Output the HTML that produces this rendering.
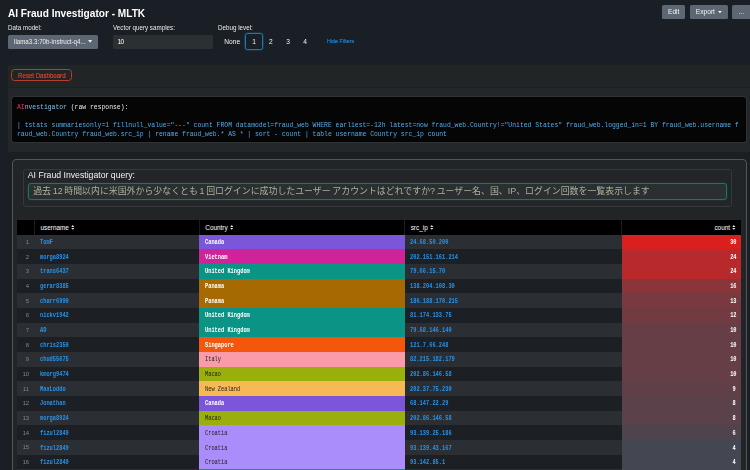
<!DOCTYPE html>
<html lang="ja">
<head>
<meta charset="utf-8">
<title>AI Fraud Investigator - MLTK</title>
<style>
html,body{margin:0;padding:0;}
body{width:750px;height:470px;overflow:hidden;position:relative;background:#1a1e25;font-family:"Liberation Sans","Noto Sans CJK JP",sans-serif;color:#fff;}
.abs{position:absolute;}
h1{position:absolute;left:7.9px;top:6.2px;margin:0;font-size:10.1px;line-height:16px;font-weight:bold;color:#fff;white-space:nowrap;letter-spacing:0px;}
.btn{position:absolute;top:5px;height:14px;background:#5c6773;border-radius:1.5px;color:#f2f4f5;font-size:6.6px;line-height:14px;text-align:center;white-space:nowrap;}
.lbl{position:absolute;top:23.3px;font-size:6.8px;line-height:9px;color:#e8eaec;white-space:nowrap;transform:scaleX(0.92);transform-origin:0 50%;}
.sel{position:absolute;left:7.6px;top:34.5px;width:90.8px;height:14.1px;background:#5c6773;border-radius:1.5px;color:#eef0f2;font-size:6.8px;line-height:14.1px;white-space:nowrap;}
.inp{position:absolute;left:113px;top:34.6px;width:99.5px;height:14px;background:#2b3033;border-radius:1.5px;color:#fff;font-size:6.6px;line-height:14px;}
.rad{position:absolute;top:37px;font-size:6.6px;line-height:9px;color:#f4f5f6;white-space:nowrap;transform:translateX(-50%);}
.radsel{position:absolute;left:245.4px;top:33.2px;width:16px;height:14.4px;border:1px solid #1b78b4;border-radius:2.5px;box-shadow:0 0 0 0.6px rgba(20,110,170,.55);}
.hide{position:absolute;left:327px;top:37.3px;font-size:6.1px;line-height:8px;color:#1c88e2;white-space:nowrap;transform:scaleX(0.885);transform-origin:0 50%;-webkit-text-stroke:0.15px #1c88e2;}
.p1{position:absolute;left:8px;top:65px;width:760px;height:22px;background:#212526;}
.reset{position:absolute;left:2.8px;top:4.2px;width:59px;height:10.3px;border:0.75px solid #b93c2c;border-radius:3.5px;color:#e6432f;font-size:6.9px;line-height:10.3px;text-align:center;white-space:nowrap;}
.reset span{display:inline-block;position:relative;left:0.8px;top:0.4px;transform:scaleX(0.885);-webkit-text-stroke:0.15px #e6432f;}
.p2{position:absolute;left:8px;top:87.5px;width:760px;height:64.5px;background:#232729;}
.code{position:absolute;left:4px;top:9px;width:734px;height:45.5px;background:#050506;border-radius:2.5px;box-shadow:0 0 0 0.7px #33383b;font-family:"Liberation Mono","DejaVu Sans Mono",monospace;font-size:7.2px;line-height:9px;color:#4fadea;white-space:pre;overflow:hidden;}
.code div{position:absolute;left:5px;transform:scaleX(0.8900);transform-origin:0 50%;}
.p3{position:absolute;left:8px;top:152px;width:760px;height:340px;background:#1b1f23;}
.outer{position:absolute;left:12px;top:158.5px;width:733px;height:330px;border:0.9px solid #50565b;border-radius:4px;background:#212527;}
.qbox{position:absolute;left:22.6px;top:168.8px;width:707.2px;height:36.6px;border:0.7px solid #34393d;border-radius:3px;background:#222629;}
.qlbl{position:absolute;left:4.2px;top:0.4px;font-size:8.7px;line-height:10px;color:#f0f1f2;white-space:nowrap;}
.qinp{position:absolute;left:4px;top:13.1px;width:697.5px;height:15.6px;border:1px solid #17785a;border-radius:3px;background:#2a2f31;box-shadow:0 0 1.5px rgba(20,130,95,.6);color:#a9b499;font-size:8.92px;word-spacing:-0.8px;line-height:15.6px;white-space:nowrap;overflow:hidden;}
.qinp span{position:absolute;left:4.6px;top:-0.1px;}
table{position:absolute;left:17px;top:220px;width:724px;border-collapse:collapse;table-layout:fixed;}
th{height:14.6px;padding:0;background:#000;color:#fff;font-size:6.4px;font-weight:normal;text-align:left;line-height:14.6px;white-space:nowrap;}
th span.t{position:relative;top:0.8px;}
td{height:14.67px;padding:0;font-family:"Liberation Mono","DejaVu Sans Mono",monospace;font-size:6.3px;line-height:14.67px;white-space:nowrap;overflow:hidden;}
.m{display:inline-block;transform:scaleX(0.847);transform-origin:0 50%;position:relative;top:1.5px;}
.m.r{transform-origin:100% 50%;}
tr:nth-child(odd) td{background:#2b2f33;}
tr:nth-child(even) td{background:#1c2025;}
td.n{font-family:"Liberation Sans",sans-serif;font-size:5.9px;color:#7f868c;text-align:right;padding-right:5.8px;letter-spacing:-0.2px;}
td.n span{position:relative;top:0.3px;}
td.u,td.i{color:#2893ea;padding-left:5.4px;font-weight:bold;}
td.c{padding-left:5.6px;}
td.c .b{font-weight:bold;}
td.k{text-align:right;padding-right:4.8px;color:#fff;font-weight:bold;}
th{border-left:0.6px solid #1b1c1e;}
th.hn{border-left:0;}
th .s{margin-left:2.2px;position:relative;top:1.2px;}
body>*{filter:blur(0.3px);}
</style>
</head>
<body>
<h1>AI Fraud Investigator - MLTK</h1>
<div class="btn" style="left:662px;width:23.4px;">Edit</div>
<div class="btn" style="left:690px;width:37.6px;">Export<svg width="3.8" height="2.4" viewBox="0 0 38 24" style="margin-left:3px;position:relative;top:-0.8px"><path d="M0 0H38L19 24Z" fill="#f2f4f5"/></svg></div>
<div class="btn" style="left:732px;width:24px;text-align:left;text-indent:6.5px;">...</div>

<div class="lbl" style="left:8px;">Data model:</div>
<div class="lbl" style="left:113px;">Vector query samples:</div>
<div class="lbl" style="left:217.6px;">Debug level:</div>
<div class="sel"><span style="position:absolute;left:6.5px;transform:scaleX(0.912);transform-origin:0 50%;">llama3.3:70b-instruct-q4...</span><svg width="4.2" height="2.8" viewBox="0 0 38 24" style="position:absolute;left:80.8px;top:5.8px"><path d="M0 0H38L19 24Z" fill="#eef0f2"/></svg></div>
<div class="inp"><span style="position:absolute;left:4.4px;letter-spacing:-0.5px;">10</span></div>
<div class="rad" style="left:232.2px;">None</div>
<div class="radsel"></div>
<div class="rad" style="left:254.2px;">1</div>
<div class="rad" style="left:270.8px;">2</div>
<div class="rad" style="left:288px;">3</div>
<div class="rad" style="left:305px;">4</div>
<div class="hide">Hide Filters</div>

<div class="p1"><div class="reset"><span>Reset Dashboard</span></div></div>
<div class="p2">
<div class="code"><div style="top:6px;"><span style="color:#f2365f">AI</span><span style="color:#79c3ef">nvestigator</span><span style="color:#e8eaec"> (raw response):</span></div><div style="top:24px;">| tstats summariesonly=1 fillnull_value="---" count FROM datamodel=fraud_web WHERE earliest=-12h latest=now fraud_web.Country!="United States" fraud_web.logged_in=1 BY fraud_web.username f</div><div style="top:33px;">raud_web.Country fraud_web.src_ip | rename fraud_web.* AS * | sort - count | table username Country src_ip count</div></div>
</div>
<div class="p3"></div>
<div class="outer"></div>
<div class="qbox">
<div class="qlbl">AI Fraud Investigator query:</div>
<div class="qinp"><span>過去 12 時間以内に米国外から少なくとも 1 回ログインに成功したユーザー アカウントはどれですか? ユーザー名、国、IP、ログイン回数を一覧表示します</span></div>
</div>
<table>
<colgroup><col style="width:17.6px"><col style="width:164.6px"><col style="width:205.6px"><col style="width:216.8px"><col style="width:119.4px"></colgroup>
<thead><tr><th class="hn"></th><th style="padding-left:5.4px"><span class="t">username</span><svg class="s" width="3.6" height="4.8" viewBox="0 0 34 46"><path d="M17 0 L32 18 H2 Z M17 46 L32 28 H2 Z" fill="#e6e8ea"/></svg></th><th style="padding-left:5.6px"><span class="t">Country</span><svg class="s" width="3.6" height="4.8" viewBox="0 0 34 46"><path d="M17 0 L32 18 H2 Z M17 46 L32 28 H2 Z" fill="#e6e8ea"/></svg></th><th style="padding-left:5.4px"><span class="t">src_ip</span><svg class="s" width="3.6" height="4.8" viewBox="0 0 34 46"><path d="M17 0 L32 18 H2 Z M17 46 L32 28 H2 Z" fill="#e6e8ea"/></svg></th><th style="text-align:right;padding-right:5.2px"><span class="t">count</span><svg class="s" width="3.6" height="4.8" viewBox="0 0 34 46"><path d="M17 0 L32 18 H2 Z M17 46 L32 28 H2 Z" fill="#e6e8ea"/></svg></th></tr></thead>
<tbody>
<tr><td class="n"><span>1</span></td><td class="u"><span class="m">TomF</span></td><td class="c" style="background:#7b56db;color:#fff"><span class="m b">Canada</span></td><td class="i"><span class="m">24.68.50.200</span></td><td class="k" style="background:#da201f"><span class="m r">30</span></td></tr>
<tr><td class="n"><span>2</span></td><td class="u"><span class="m">morga8924</span></td><td class="c" style="background:#cf2399;color:#fff"><span class="m b">Vietnam</span></td><td class="i"><span class="m">202.151.161.214</span></td><td class="k" style="background:#b7292b"><span class="m r">24</span></td></tr>
<tr><td class="n"><span>3</span></td><td class="u"><span class="m">trans6437</span></td><td class="c" style="background:#099486;color:#fff"><span class="m b">United Kingdom</span></td><td class="i"><span class="m">79.66.15.70</span></td><td class="k" style="background:#b7292b"><span class="m r">24</span></td></tr>
<tr><td class="n"><span>4</span></td><td class="u"><span class="m">gerar8385</span></td><td class="c" style="background:#a76a02;color:#fff"><span class="m b">Panama</span></td><td class="i"><span class="m">138.204.108.30</span></td><td class="k" style="background:#89353a"><span class="m r">16</span></td></tr>
<tr><td class="n"><span>5</span></td><td class="u"><span class="m">charr6990</span></td><td class="c" style="background:#a76a02;color:#fff"><span class="m b">Panama</span></td><td class="i"><span class="m">186.188.170.215</span></td><td class="k" style="background:#783940"><span class="m r">13</span></td></tr>
<tr><td class="n"><span>6</span></td><td class="u"><span class="m">nickv1942</span></td><td class="c" style="background:#099486;color:#fff"><span class="m b">United Kingdom</span></td><td class="i"><span class="m">81.174.133.75</span></td><td class="k" style="background:#723b42"><span class="m r">12</span></td></tr>
<tr><td class="n"><span>7</span></td><td class="u"><span class="m">AD</span></td><td class="c" style="background:#099486;color:#fff"><span class="m b">United Kingdom</span></td><td class="i"><span class="m">79.68.146.140</span></td><td class="k" style="background:#663e46"><span class="m r">10</span></td></tr>
<tr><td class="n"><span>8</span></td><td class="u"><span class="m">chris2350</span></td><td class="c" style="background:#f4560c;color:#fff"><span class="m b">Singapore</span></td><td class="i"><span class="m">121.7.66.248</span></td><td class="k" style="background:#663e46"><span class="m r">10</span></td></tr>
<tr><td class="n"><span>9</span></td><td class="u"><span class="m">chud55675</span></td><td class="c" style="background:#fb9aa8;color:#222"><span class="m">Italy</span></td><td class="i"><span class="m">82.215.182.179</span></td><td class="k" style="background:#663e46"><span class="m r">10</span></td></tr>
<tr><td class="n"><span>10</span></td><td class="u"><span class="m">kmorg9474</span></td><td class="c" style="background:#9aaf0c;color:#222"><span class="m">Macao</span></td><td class="i"><span class="m">202.86.146.58</span></td><td class="k" style="background:#663e46"><span class="m r">10</span></td></tr>
<tr><td class="n"><span>11</span></td><td class="u"><span class="m">MaxLoddo</span></td><td class="c" style="background:#f6b955;color:#222"><span class="m">New Zealand</span></td><td class="i"><span class="m">202.37.75.230</span></td><td class="k" style="background:#613f48"><span class="m r">9</span></td></tr>
<tr><td class="n"><span>12</span></td><td class="u"><span class="m">Jonathan</span></td><td class="c" style="background:#7b56db;color:#fff"><span class="m b">Canada</span></td><td class="i"><span class="m">68.147.22.29</span></td><td class="k" style="background:#5b414a"><span class="m r">8</span></td></tr>
<tr><td class="n"><span>13</span></td><td class="u"><span class="m">morga8924</span></td><td class="c" style="background:#9aaf0c;color:#222"><span class="m">Macao</span></td><td class="i"><span class="m">202.86.146.58</span></td><td class="k" style="background:#5b414a"><span class="m r">8</span></td></tr>
<tr><td class="n"><span>14</span></td><td class="u"><span class="m">fizul2849</span></td><td class="c" style="background:#ab8cfb;color:#222"><span class="m">Croatia</span></td><td class="i"><span class="m">93.139.25.186</span></td><td class="k" style="background:#4f444e"><span class="m r">6</span></td></tr>
<tr><td class="n"><span>15</span></td><td class="u"><span class="m">fizul2849</span></td><td class="c" style="background:#ab8cfb;color:#222"><span class="m">Croatia</span></td><td class="i"><span class="m">93.139.43.167</span></td><td class="k" style="background:#444752"><span class="m r">4</span></td></tr>
<tr><td class="n"><span>16</span></td><td class="u"><span class="m">fizul2849</span></td><td class="c" style="background:#ab8cfb;color:#222"><span class="m">Croatia</span></td><td class="i"><span class="m">93.142.85.1</span></td><td class="k" style="background:#444752"><span class="m r">4</span></td></tr>
<tr><td class="n"><span>17</span></td><td class="u"><span class="m"></span></td><td class="c" style="background:#099486;color:#fff"><span class="m b">United Kingdom</span></td><td class="i"><span class="m"></span></td><td class="k" style="background:#444752"><span class="m r">4</span></td></tr>
</tbody>
</table>
</body>
</html>
